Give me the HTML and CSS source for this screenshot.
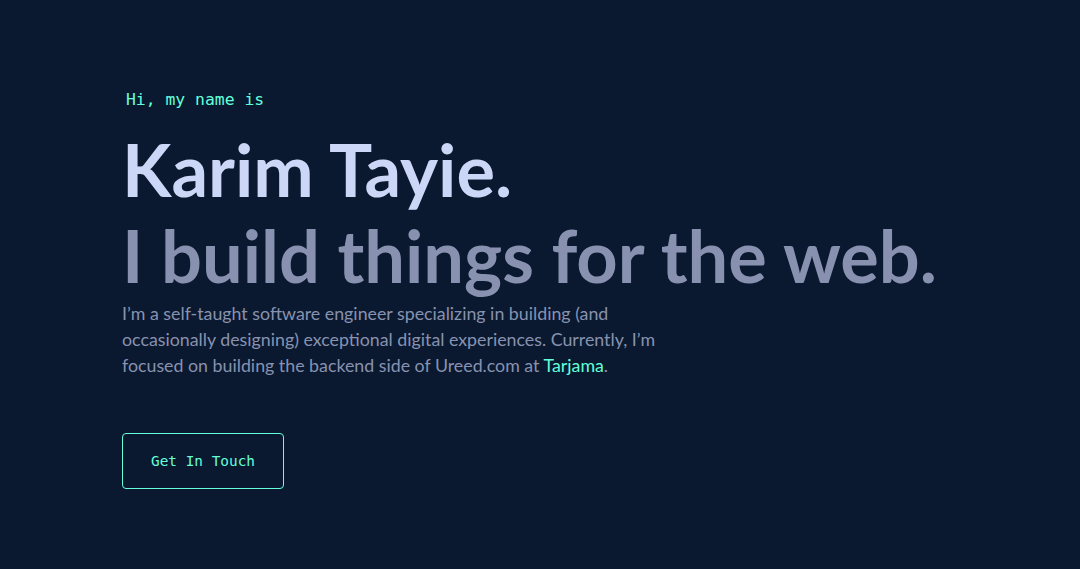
FILE: index.html
```html
<!DOCTYPE html>
<html lang="en">
<head>
<meta charset="utf-8">
<title>Karim Tayie</title>
<link rel="stylesheet" href="styles.css">
</head>
<body>
<main class="hero">
  <p class="hero-intro">Hi, my name is</p>
  <h1 class="hero-name">Karim Tayie.</h1>
  <h2 class="hero-tagline">I build things for the web.</h2>
  <p class="hero-about">I’m a self-taught software engineer specializing in building (and occasionally designing) exceptional digital experiences. Currently, I’m focused on building the backend side of Ureed.com at <a class="hero-link" href="#">Tarjama</a>.</p>
  <a class="hero-button" href="#">Get In Touch</a>
</main>
</body>
</html>
```
FILE: styles.css
```css
html, body {
  margin: 0;
  padding: 0;
  background: #0a192f;
}
body {
  width: 1080px;
  height: 569px;
  overflow: hidden;
  font-family: "Lato", "Liberation Sans", sans-serif;
}
.hero {
  display: flex;
  flex-direction: column;
  align-items: flex-start;
  padding: 89px 0 0 122px;
}
.hero-intro {
  margin: 0 0 15px 4px;
  font-family: "DejaVu Sans Mono", "Liberation Mono", monospace;
  font-size: 16.4px;
  line-height: 22px;
  color: #64ffda;
}
.hero-name,
.hero-tagline {
  margin: 0;
  font-size: 72.2px;
  line-height: 86px;
  font-weight: 700;
}
.hero-name {
  color: #ccd6f6;
}
.hero-tagline {
  color: #8892b0;
}
.hero-about {
  margin: 2px 0 0;
  max-width: 540px;
  font-size: 17.8px;
  line-height: 26px;
  color: #8892b0;
}
.hero-link {
  color: #64ffda;
  text-decoration: none;
}
.hero-button {
  margin-top: 55px;
  padding: 18px 28px;
  border: 1px solid #64ffda;
  border-radius: 4px;
  font-family: "DejaVu Sans Mono", "Liberation Mono", monospace;
  font-size: 14.4px;
  line-height: 18px;
  color: #64ffda;
  text-decoration: none;
}
```
